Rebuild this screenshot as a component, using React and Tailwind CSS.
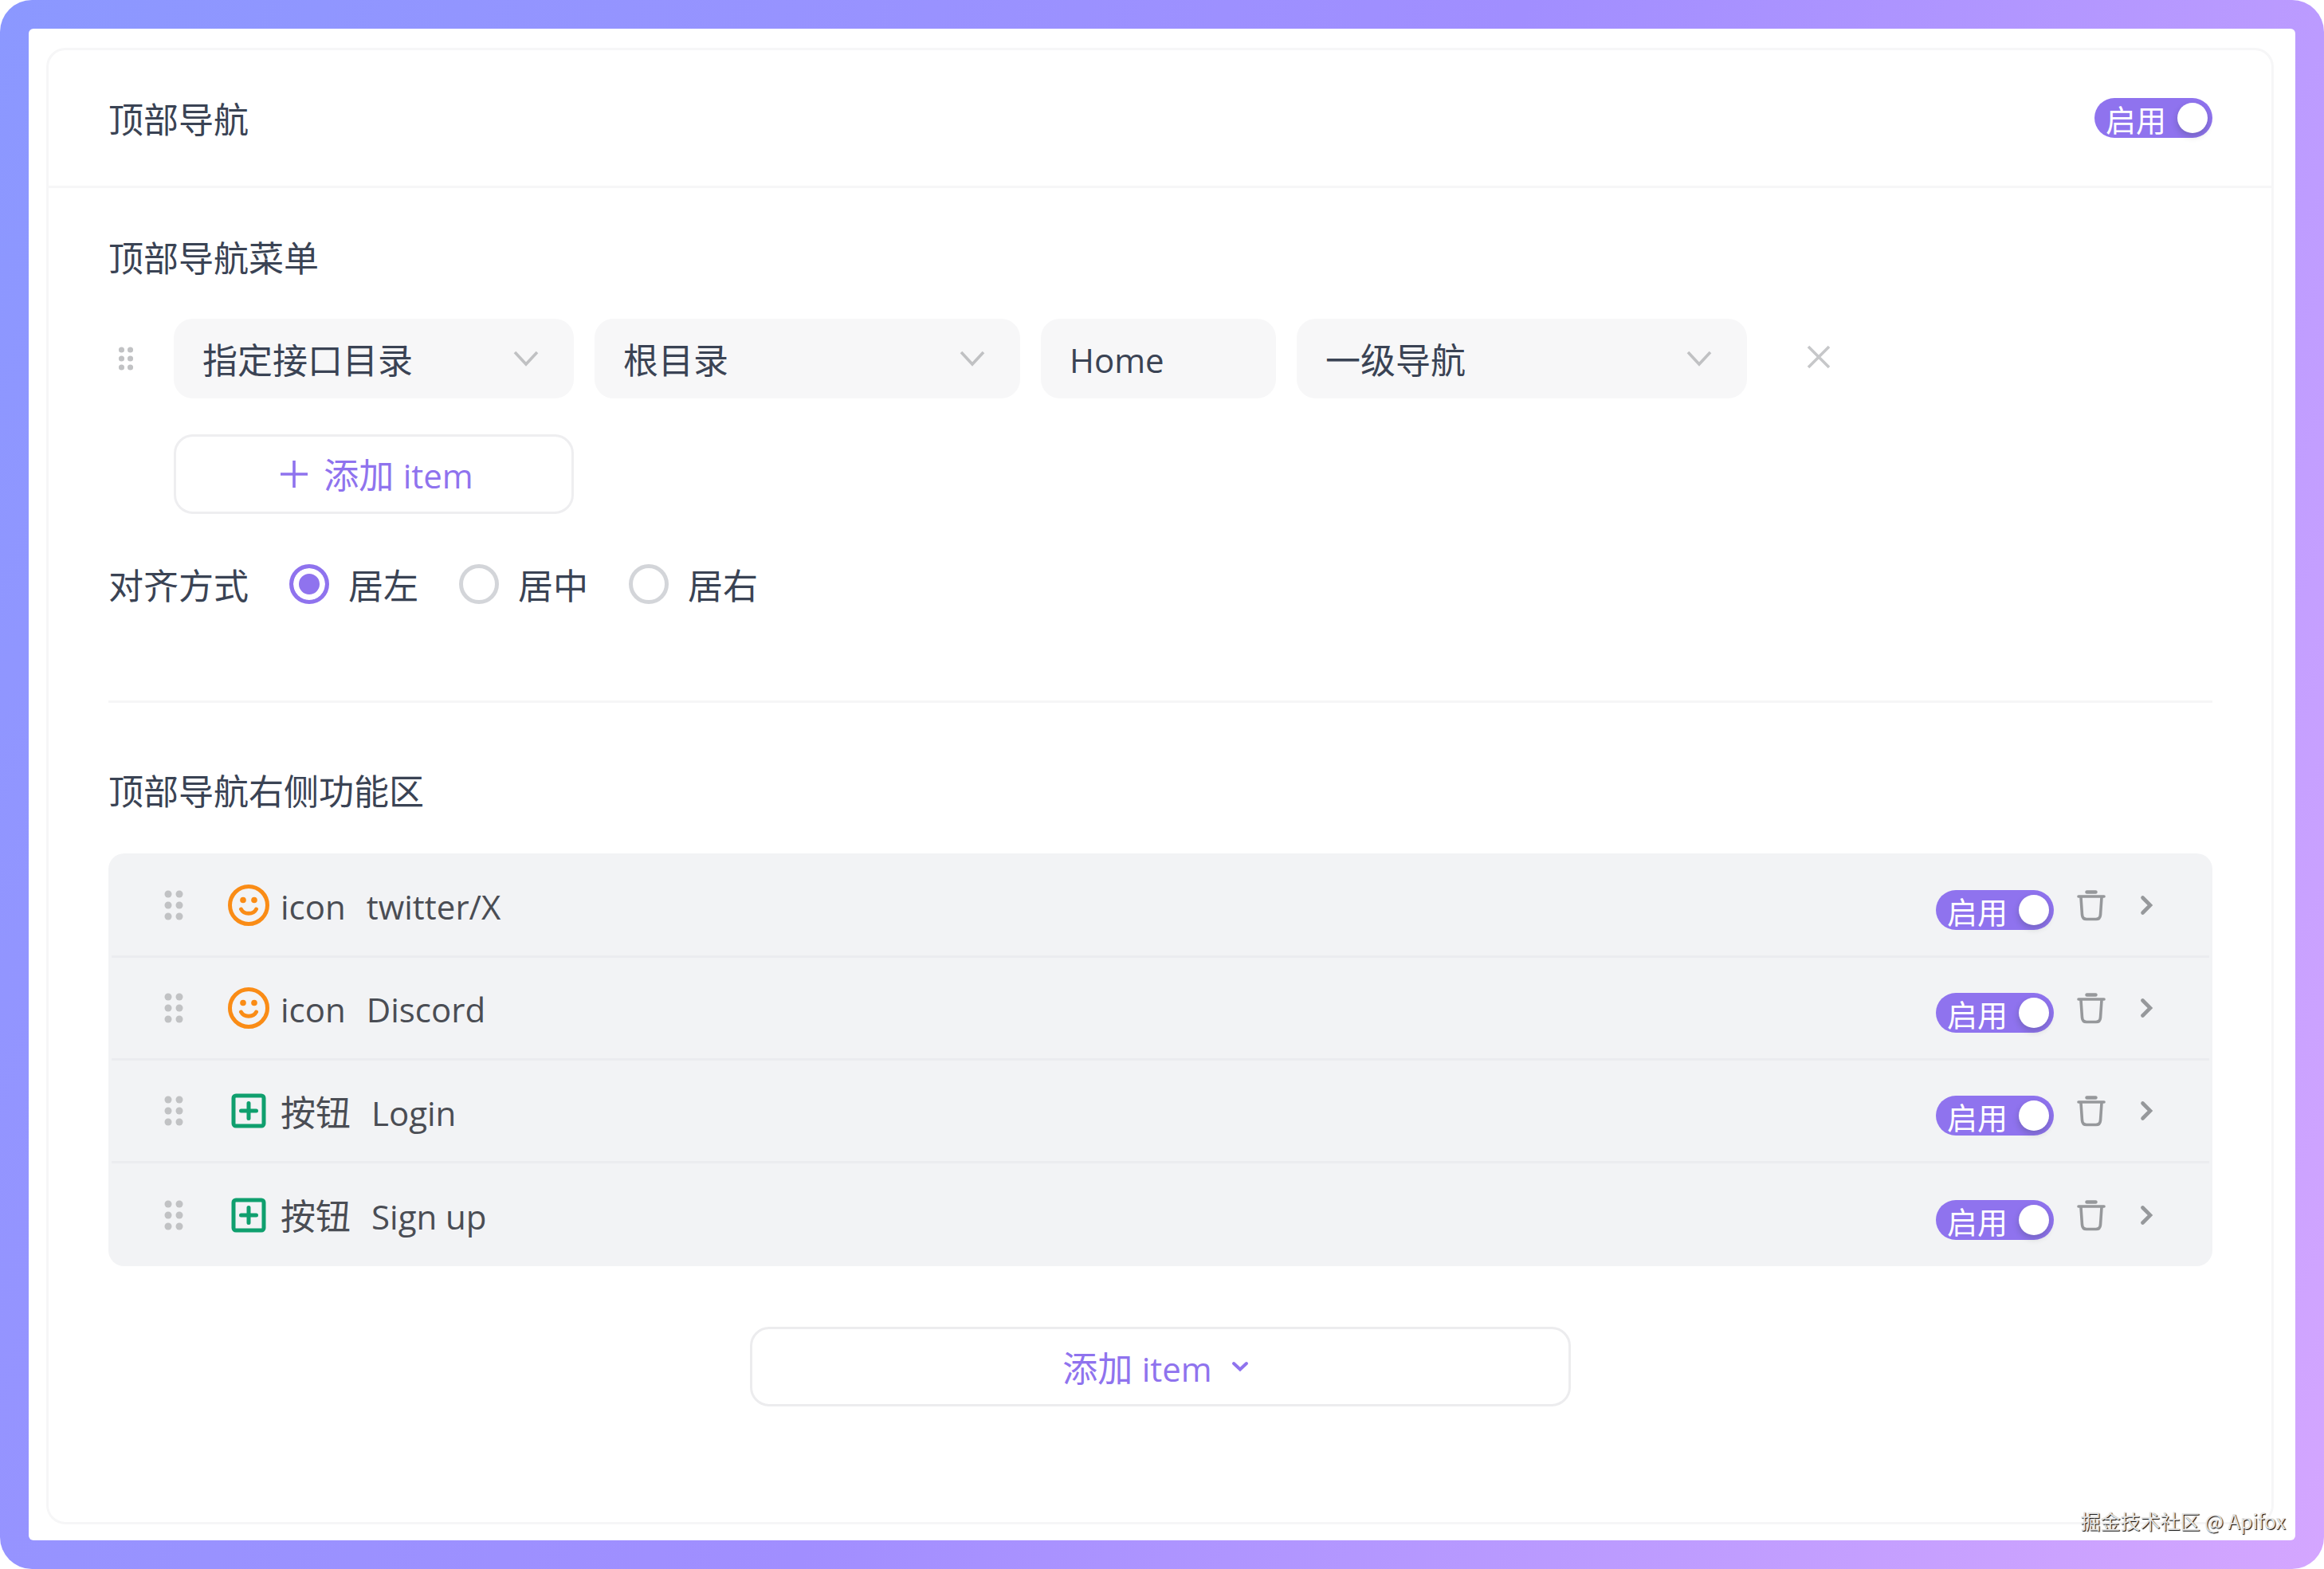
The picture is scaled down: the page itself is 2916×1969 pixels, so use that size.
import { useState } from 'react'

const fontStack = "font-['Open_Sans','Noto_Sans_CJK_SC',sans-serif]"

const initialItems = [
  { id: 1, type: 'icon', name: 'twitter/X' },
  { id: 2, type: 'icon', name: 'Discord' },
  { id: 3, type: '按钮', name: 'Login' },
  { id: 4, type: '按钮', name: 'Sign up' },
]

const aligns = [
  { value: 'left', label: '居左' },
  { value: 'center', label: '居中' },
  { value: 'right', label: '居右' },
]

function DragDots({ className }) {
  return (
    <svg viewBox="0 0 24 38" className={className} fill="currentColor">
      <circle cx="5" cy="5" r="4.5" />
      <circle cx="19" cy="5" r="4.5" />
      <circle cx="5" cy="19" r="4.5" />
      <circle cx="19" cy="19" r="4.5" />
      <circle cx="5" cy="33" r="4.5" />
      <circle cx="19" cy="33" r="4.5" />
    </svg>
  )
}

function ChevronDown({ className }) {
  return (
    <svg
      viewBox="0 0 32 20"
      className={className}
      fill="none"
      stroke="currentColor"
      strokeWidth="3.6"
    >
      <path d="M2 2 L16 17 L30 2" />
    </svg>
  )
}

function SmileIcon() {
  return (
    <svg viewBox="0 0 52 52" className="size-[52px]" fill="none" stroke="#fa8c16">
      <circle cx="26" cy="26" r="23.5" strokeWidth="5" />
      <circle cx="19" cy="19.5" r="3.8" fill="#fa8c16" stroke="none" />
      <circle cx="33" cy="19.5" r="3.8" fill="#fa8c16" stroke="none" />
      <path
        d="M16.5 31 C20 38 32 38 35.5 31"
        strokeWidth="5"
        strokeLinecap="round"
      />
    </svg>
  )
}

function PlusSquareIcon() {
  return (
    <svg viewBox="0 0 52 52" className="size-[52px]" fill="none" stroke="#0f9f6e">
      <rect x="7" y="7" width="38" height="38" rx="3" strokeWidth="5" />
      <path
        d="M26 16.5 V35.5 M16.5 26 H35.5"
        strokeWidth="5"
        strokeLinecap="round"
      />
    </svg>
  )
}

function TrashIcon() {
  return (
    <svg
      viewBox="0 0 36 40"
      className="h-10 w-9"
      fill="none"
      stroke="#96989b"
      strokeWidth="3.6"
      strokeLinecap="round"
    >
      <path d="M12.5 3.5 H23.5" strokeWidth="4.4" />
      <path d="M2 9 H34" />
      <path d="M5 10 L6.5 32 Q7 37.5 12 37.5 H24 Q29 37.5 29.5 32 L31 10" />
    </svg>
  )
}

function Switch({ label, className = '' }) {
  const [on, setOn] = useState(true)

  return (
    <button
      type="button"
      role="switch"
      aria-checked={on}
      aria-label={label}
      onClick={() => setOn(!on)}
      className={`flex h-[50px] w-[148px] shrink-0 items-center justify-between rounded-full pr-1.5 pl-3.5 ${
        on ? 'bg-[#8f73ee]' : 'bg-gray-300'
      } ${className}`}
    >
      <span className="pt-1 text-[38px] leading-[46px] text-white">启用</span>
      <span className="size-[38px] rounded-full bg-white shadow-[0_4px_8px_rgba(0,35,11,0.2)]" />
    </button>
  )
}

function Select({ label, options, className }) {
  return (
    <div className={`grid h-[100px] items-center ${className}`}>
      <select
        aria-label={label}
        className="col-start-1 row-start-1 h-full w-full appearance-none rounded-3xl bg-[#f7f7f8] pt-1 pr-20 pl-9 outline-none"
      >
        {options.map((option) => (
          <option key={option}>{option}</option>
        ))}
      </select>
      <ChevronDown className="pointer-events-none col-start-1 row-start-1 mr-11 h-5 w-8 justify-self-end text-[#c0c1c3]" />
    </div>
  )
}

function ItemRow({ item, onRemove }) {
  return (
    <li className="mx-1 flex h-[129px] items-center border-b-3 border-[#ebecef] pr-[68px] pl-[66px] last:border-b-0">
      <DragDots className="mr-14 h-[38px] w-6 cursor-move text-[#c1c2c4]" />
      {item.type === 'icon' ? <SmileIcon /> : <PlusSquareIcon />}
      <div className="ml-[14px] flex flex-1 items-baseline gap-[26px] pt-1 text-[#4a4d54]">
        <span className={item.type === 'icon' ? 'text-[42px]' : ''}>
          {item.type}
        </span>
        <span className="text-[42px]">{item.name}</span>
      </div>
      <Switch label={item.name} className="mt-3" />
      <button
        type="button"
        aria-label="删除"
        className="ml-[29px]"
        onClick={() => onRemove(item.id)}
      >
        <TrashIcon />
      </button>
      <button type="button" aria-label="展开" className="ml-[42px]">
        <svg
          viewBox="0 0 20 28"
          className="h-7 w-5"
          fill="none"
          stroke="#96989b"
          strokeWidth="4.6"
          strokeLinecap="round"
        >
          <path d="M4.5 4.5 L14 14 L4.5 23.5" />
        </svg>
      </button>
    </li>
  )
}

function App() {
  const [items, setItems] = useState(initialItems)
  const [align, setAlign] = useState('left')
  const [title, setTitle] = useState('Home')

  return (
    <div
      className={`relative flex min-h-screen flex-col rounded-[40px] bg-linear-115 from-[#8b98ff] via-[#a18eff] to-[#d4a6ff] p-9 text-[44px] leading-[60px] text-[#3a4354] ${fontStack}`}
    >
      <main className="flex flex-1 flex-col rounded-md bg-white pt-6 pr-[27px] pb-5 pl-[22px]">
        <section className="flex-1 rounded-3xl border-3 border-[#f6f6f7]">
          <header className="flex h-[173px] items-center justify-between border-b-3 border-[#f6f6f7] pr-[74px] pl-[75px]">
            <h1 className="pt-1">顶部导航</h1>
            <Switch label="顶部导航" />
          </header>

          <div className="pt-[58px] pr-[74px] pl-[75px]">
            <h2>顶部导航菜单</h2>

            {/* Menu items */}
            <div className="mt-[46px] flex items-center">
              <DragDots className="mr-[50px] ml-3 h-[30px] w-5 cursor-move text-[#c1c2c4]" />
              <div className="flex gap-[26px]">
                <Select
                  label="类型"
                  options={['指定接口目录']}
                  className="w-[502px]"
                />
                <Select
                  label="目录"
                  options={['根目录']}
                  className="w-[534px]"
                />
                <input
                  type="text"
                  aria-label="标题"
                  value={title}
                  onChange={(e) => setTitle(e.target.value)}
                  className="h-[100px] w-[295px] rounded-3xl bg-[#f7f7f8] px-9 pt-0.5 text-[42px] outline-none"
                />
                <Select
                  label="层级"
                  options={['一级导航']}
                  className="w-[565px]"
                />
              </div>
              <button type="button" aria-label="移除" className="mb-1 ml-[75px]">
                <svg
                  viewBox="0 0 30 30"
                  className="size-[30px]"
                  fill="none"
                  stroke="#c6c7c9"
                  strokeWidth="3.6"
                >
                  <path d="M2 2 L28 28 M28 2 L2 28" />
                </svg>
              </button>
            </div>

            <button
              type="button"
              className="mt-[45px] ml-[82px] flex h-[100px] w-[502px] items-center justify-center gap-5 rounded-3xl border-3 border-[#eeeef0] pl-2 text-[#8f73ee]"
            >
              <svg
                viewBox="0 0 34 34"
                className="size-[34px]"
                stroke="currentColor"
                strokeWidth="3.6"
              >
                <path d="M17 0 V34 M0 17 H34" />
              </svg>
              <span className="pt-0.5">
                添加 <span className="text-[42px]">item</span>
              </span>
            </button>

            {/* Alignment */}
            <fieldset className="mt-14">
              <div className="flex items-center gap-[51px]">
                <span className="pt-1">对齐方式</span>
                {aligns.map(({ value, label }) => (
                  <label key={value} className="flex items-center gap-6">
                    <input
                      type="radio"
                      name="align"
                      value={value}
                      checked={align === value}
                      onChange={() => setAlign(value)}
                      className="size-[50px] appearance-none rounded-full border-5 border-[#d3d5d9] bg-white checked:border-[#8f73ee] checked:bg-[#8f73ee] checked:shadow-[inset_0_0_0_7px_white]"
                    />
                    <span className="pt-1">{label}</span>
                  </label>
                ))}
              </div>
            </fieldset>

            <hr className="mt-[114px] border-t-3 border-[#f6f6f7]" />

            <h2 className="mt-[81px]">顶部导航右侧功能区</h2>
            <ul className="mt-[48px] rounded-[20px] bg-[#f2f3f5] pt-0.5">
              {items.map((item) => (
                <ItemRow
                  key={item.id}
                  item={item}
                  onRemove={(id) => setItems(items.filter((i) => i.id !== id))}
                />
              ))}
            </ul>

            <button
              type="button"
              className="mx-auto mt-[76px] mb-12 flex h-[100px] w-[1030px] items-center justify-center gap-6 rounded-3xl border-3 border-[#ececee] pr-3 text-[#8f73ee]"
            >
              <span className="pt-1">
                添加 <span className="text-[42px]">item</span>
              </span>
              <svg
                viewBox="0 0 22 14"
                className="h-3.5 w-[22px]"
                fill="none"
                stroke="currentColor"
                strokeWidth="4"
                strokeLinecap="round"
              >
                <path d="M3 3 L11 10.5 L19 3" />
              </svg>
            </button>
          </div>
        </section>
      </main>

      <p className="absolute right-12 bottom-[41px] text-[25px] leading-10 font-['Noto_Sans_CJK_SC',sans-serif] text-[#e4e4e4] [text-shadow:1px_1px_1px_#000]">
        掘金技术社区 @ Apifox
      </p>
    </div>
  )
}

export default App
